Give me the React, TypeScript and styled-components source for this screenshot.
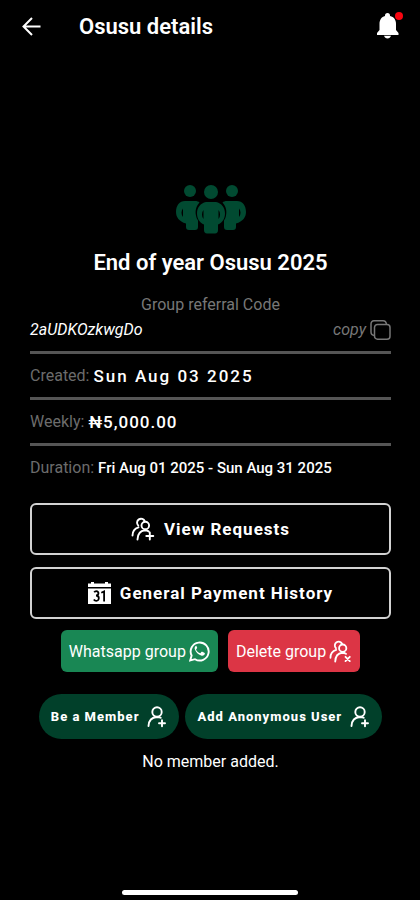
import React from "react";
import styled, { createGlobalStyle } from "styled-components";

const GlobalStyle = createGlobalStyle`
  * { box-sizing: border-box; }
  body { margin: 0; background: #000; color: #fff; font-family: Roboto, "Noto Sans", sans-serif; }
  button { font-family: inherit; cursor: pointer; }
  svg { display: block; flex: none; }
`;

const Screen = styled.div`
  min-height: 100vh;
  display: flex;
  flex-direction: column;
  background: #000;
`;

const Header = styled.header`
  display: flex;
  align-items: center;
  height: 54px;
  padding: 0 16px 0 20px;
`;

const IconButton = styled.button`
  position: relative;
  display: flex;
  padding: 0;
  border: 0;
  background: none;
  color: #fff;
`;

const PageTitle = styled.h1`
  flex: 1;
  margin: 0 0 0 35px;
  font-size: 22px;
  line-height: 28px;
  font-weight: 600;
`;

const AlertDot = styled.span`
  position: absolute;
  top: -1px;
  right: 1px;
  width: 8px;
  height: 8px;
  border-radius: 50%;
  background: #f80510;
`;

const Main = styled.main`
  flex: 1;
  display: flex;
  flex-direction: column;
  align-items: center;
  padding: 130px 29px 0 30px;
`;

const GroupName = styled.h2`
  margin: 14px 0 0;
  font-size: 22px;
  line-height: 30px;
  font-weight: 600;
`;

const Caption = styled.p`
  margin: 16px 0 0;
  font-size: 16px;
  line-height: 22px;
  color: #777;
`;

const CodeRow = styled.div`
  align-self: stretch;
  display: flex;
  justify-content: space-between;
  align-items: center;
  height: 35px;
  padding-bottom: 8px;
`;

const Code = styled.em`
  font-size: 16px;
  line-height: 20px;
`;

const CopyButton = styled.button`
  display: flex;
  align-items: center;
  gap: 4px;
  padding: 0;
  border: 0;
  background: none;
  color: #777;
  font-size: 16px;
  line-height: 20px;
  font-style: italic;
`;

const Facts = styled.dl`
  align-self: stretch;
  margin: 0;
`;

const Fact = styled.div`
  display: flex;
  align-items: center;
  gap: 4px;
  height: 46px;
  border-top: 3px solid #555;
  white-space: nowrap;
`;

const FactLabel = styled.dt`
  font-size: 16px;
  line-height: 22px;
  color: #6c6c6c;
`;

const FactValue = styled.dd<{ $size: number; $tracking: number }>`
  margin: 0;
  font-size: ${(p) => p.$size}px;
  line-height: 22px;
  font-weight: 500;
  letter-spacing: ${(p) => p.$tracking}px;
`;

const Stack = styled.div`
  align-self: stretch;
  display: flex;
  flex-direction: column;
  gap: 12px;
  margin-top: 14px;
`;

const OutlineButton = styled.button`
  display: flex;
  align-items: center;
  justify-content: center;
  gap: 9px;
  height: 52px;
  border: 2px solid #d2d2d2;
  border-radius: 6px;
  background: #000;
  color: #fff;
  font-size: 17px;
  font-weight: 700;
  letter-spacing: 1px;
`;

const ButtonRow = styled.div<{ $gap: number; $top: number }>`
  display: flex;
  justify-content: center;
  gap: ${(p) => p.$gap}px;
  margin-top: ${(p) => p.$top}px;
  white-space: nowrap;
`;

const SolidButton = styled.button<{ $color: string }>`
  display: flex;
  align-items: center;
  gap: 3px;
  height: 42px;
  padding: 0 8px;
  border: 0;
  border-radius: 6px;
  background: ${(p) => p.$color};
  color: #fff;
  font-size: 16px;
`;

const PillButton = styled.button`
  display: flex;
  align-items: center;
  gap: 8px;
  height: 45px;
  padding: 0 12px;
  border: 0;
  border-radius: 23px;
  background: #01402a;
  color: #fff;
  font-size: 13px;
  font-weight: 800;
  letter-spacing: 1px;
`;

const EmptyNote = styled.p`
  margin: 12px 0 0;
  font-size: 16px;
  line-height: 22px;
`;

const HomeBar = styled.div`
  align-self: center;
  width: 42%;
  height: 5px;
  margin-bottom: 5px;
  border-radius: 3px;
  background: #fff;
`;

const BackIcon = () => (
  <svg width="24" height="24" viewBox="0 0 24 24" fill="none" stroke="currentColor" strokeWidth="2">
    <path d="M20.500 11.500H3.500M12 3L3.500 11.500l8.500 8.500" />
  </svg>
);

const BellIcon = () => (
  <svg width="32" height="28" viewBox="0 0 32 28" fill="currentColor">
    <path d="M13 2.500a2 2 0 0 1 5 0v.6c4 .8 6 4 6 8v5.900l2.500 3v2H5v-2l2.500-3v-5.900c0-4 2-7.200 5.500-8z" />
    <path d="M12 22.800h7c-.5 1.600-1.800 2.700-3.500 2.700s-3-1.100-3.500-2.700z" />
  </svg>
);

const GroupIcon = () => (
  <svg width="70" height="50" viewBox="0 0 70 50" fill="#014a31">
    <circle cx="14" cy="7" r="6" />
    <circle cx="56" cy="7" r="6" />
    <circle cx="35" cy="8" r="7" />
    <path fillRule="evenodd" d="M9 17h10c2 0 3.500.5 4.500 1.500-3.500 4-4.500 8-3.500 13 .4 2 1 3.500 2 5V43c0 2-1 3-3 3h-6c-2 0-3-1-3-3v-3.500C3 37.500 0 33 0 28c0-6.500 3.500-11 9-11zM7 24.500c-2 2.500-2 6 0 8.500z" />
    <path fillRule="evenodd" d="M61 17H51c-2 0-3.500.5-4.500 1.500 3.500 4 4.500 8 3.500 13-.4 2-1 3.500-2 5V43c0 2 1 3 3 3h6c2 0 3-1 3-3v-3.500c7-2 10-6.500 10-11.500 0-6.500-3.500-11-9-11zM63 24.500c2 2.500 2 6 0 8.500z" />
    <path fillRule="evenodd" d="M30 18h10c5.500 1 9 5.500 9 11.500 0 5-2.500 9-7 11V46c0 2-1 3.500-3 3.500h-8c-2 0-3-1.500-3-3.500v-5.500c-4.500-2-7-6-7-11 0-6 3.500-10.500 9-11.500zM27.500 26c-2 2.500-2 6.500 0 9zM42.500 26c2 2.500 2 6.500 0 9z" />
  </svg>
);

const CopyIcon = () => (
  <svg width="21" height="20" viewBox="0 0 21 20" fill="none" stroke="currentColor" strokeWidth="1.500">
    <rect x="4.500" y="4.500" width="15.500" height="14.700" rx="3" />
    <path d="M4.500 15.500C2 15.200 1 14 1 12V4c0-2 1-3.200 3-3.200h9c2 0 3.200 1 3.500 3.700" />
  </svg>
);

const UsersIcon = ({ mark, size }: { mark: "plus" | "cross"; size: number }) => (
  <svg width={size} height={size} viewBox="0 0 24 24" fill="none" stroke="currentColor" strokeWidth="1.900" strokeLinecap="round">
    <path d="M7.300 8.600A4 4 0 1 1 13.800 4.300" />
    <circle cx="14.300" cy="8.500" r="3.800" />
    <path d="M1.500 18.500c0-4 2.200-7 6-8.200" />
    <path d="M6.500 22.500c.2-5.500 3-8.700 7.300-9.200 1.600 0 3 .4 4 1.200" />
    {mark === "plus" ? <path d="M18.800 15.500v7M15.300 19h7" /> : <path d="M17.200 17.500l4.500 4.500M21.700 17.500L17.200 22" />}
  </svg>
);

const UserPlusIcon = () => (
  <svg width="20" height="22" viewBox="0 0 20 22" fill="none" stroke="currentColor" strokeWidth="1.900" strokeLinecap="round">
    <circle cx="10" cy="6" r="4.700" />
    <path d="M1.500 20c.3-5.300 3.300-8.700 8.500-9 1.500 0 2.700.2 3.700.8" />
    <path d="M15 14.200v6M12 17.200h6" />
  </svg>
);

const CalendarIcon = () => (
  <svg width="23" height="22" viewBox="0 0 23 22" fill="currentColor">
    <path d="M0 1.500h3V0h3v1.500h11V0h3v1.500h3V5H0z" />
    <path d="M0 6.500h23V22H0z" />
    <g fill="none" stroke="#000" strokeWidth="1.800">
      <path d="M6.200 10.200c.5-.8 1.200-1.100 2.100-1.100 2.900 0 2.900 4.400-.3 4.400 3.700 0 3.700 5.300.3 5.300-1.100 0-1.900-.4-2.500-1.300" />
      <path d="M13.300 10.800l2.800-1.300v10" />
    </g>
  </svg>
);

const WhatsappIcon = () => (
  <svg width="21" height="22" viewBox="0 0 21 22">
    <path d="M1.200 20.500l1.400-5A9 9 0 1 1 6 19.200z" fill="none" stroke="currentColor" strokeWidth="1.900" />
    <path d="M7 5.800c-1.300.9-1.700 2.200-1.100 3.700 1.200 3 3.200 5 6.200 6 1.700.6 3 0 3.700-1.500.2-.7 0-1-.5-1.300l-1.900-.9c-.5-.2-.8-.1-1.100.3l-.7.9c-.3.300-.6.300-1 .1-1.500-.7-2.600-1.700-3.400-3.100-.2-.4-.1-.6.200-.9l.6-.8c.200-.3.200-.6.100-.9l-.8-1.600c-.1-.2-.2-.2-.3 0z" fill="currentColor" />
  </svg>
);

const facts = [
  { label: "Created:", value: "Sun Aug 03 2025", size: 17, tracking: 2 },
  { label: "Weekly:", value: "₦5,000.00", size: 17, tracking: 1 },
  { label: "Duration:", value: "Fri Aug 01 2025 - Sun Aug 31 2025", size: 15, tracking: 0 },
];

export default function App() {
  return (
    <>
      <GlobalStyle />
      <Screen>
        <Header>
          <IconButton aria-label="Back"><BackIcon /></IconButton>
          <PageTitle>Osusu details</PageTitle>
          <IconButton aria-label="Notifications"><BellIcon /><AlertDot /></IconButton>
        </Header>
        <Main>
          <GroupIcon />
          <GroupName>End of year Osusu 2025</GroupName>
          <Caption>Group referral Code</Caption>
          <CodeRow>
            <Code>2aUDKOzkwgDo</Code>
            <CopyButton>copy<CopyIcon /></CopyButton>
          </CodeRow>
          <Facts>
            {facts.map((f) => (
              <Fact key={f.label}>
                <FactLabel>{f.label}</FactLabel>
                <FactValue $size={f.size} $tracking={f.tracking}>{f.value}</FactValue>
              </Fact>
            ))}
          </Facts>
          <Stack>
            <OutlineButton><UsersIcon mark="plus" size={24} />View Requests</OutlineButton>
            <OutlineButton><CalendarIcon />General Payment History</OutlineButton>
          </Stack>
          <ButtonRow $gap={10} $top={11}>
            <SolidButton $color="#198754">Whatsapp group<WhatsappIcon /></SolidButton>
            <SolidButton $color="#dc3545">Delete group<UsersIcon mark="cross" size={23} /></SolidButton>
          </ButtonRow>
          <ButtonRow $gap={6} $top={22}>
            <PillButton>Be a Member<UserPlusIcon /></PillButton>
            <PillButton>Add Anonymous User<UserPlusIcon /></PillButton>
          </ButtonRow>
          <EmptyNote>No member added.</EmptyNote>
        </Main>
        <HomeBar />
      </Screen>
    </>
  );
}
